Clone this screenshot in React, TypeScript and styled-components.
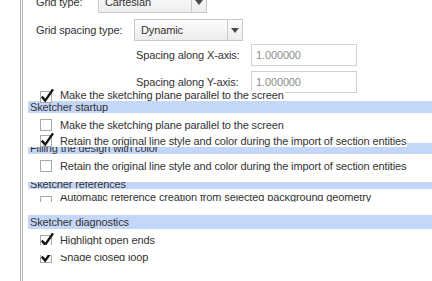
import styled, { createGlobalStyle } from "styled-components";

const GlobalStyle = createGlobalStyle`
  html, body {
    margin: 0;
    padding: 0;
    background: #fff;
    overflow: hidden;
  }
  body {
    font-family: "Liberation Sans", Arial, sans-serif;
    font-size: 11px;
    color: #333;
    letter-spacing: -0.13px;
  }
`;

const Page = styled.div`
  height: 281px;
  padding-left: 20px;
  overflow: hidden;
`;

const Panel = styled.div`
  height: 100%;
  border-left: 3px double #b2b2b2;
  display: flex;
  flex-direction: column;
  align-items: flex-start;
`;

const Form = styled.div`
  display: flex;
  flex-direction: column;
  flex-shrink: 0;
  margin-top: -9px;
  padding-left: 13px;
`;

const FormRow = styled.div<{ $gap: number; $indent?: number }>`
  display: flex;
  align-items: center;
  height: 22px;
  margin-top: ${({ $gap }) => $gap}px;
  padding-left: ${({ $indent }) => $indent ?? 0}px;
`;

const FieldLabel = styled.span<{ $w: number }>`
  width: ${({ $w }) => $w}px;
  flex-shrink: 0;
  white-space: nowrap;
`;

const Select = styled.div`
  display: flex;
  width: 109px;
  height: 22px;
  box-sizing: border-box;
  border: 1px solid #c9c9c9;
  background: linear-gradient(#fefefe, #ececec);
`;

const SelectValue = styled.span`
  flex: 1;
  padding-left: 6px;
  line-height: 20px;
`;

const SelectArrow = styled.span`
  width: 14px;
  border-left: 1px solid #c9c9c9;
  display: flex;
  align-items: center;
  justify-content: center;

  &::after {
    content: "";
    border-left: 4px solid transparent;
    border-right: 4px solid transparent;
    border-top: 5px solid #4a4a4a;
  }
`;

const NumInput = styled.input`
  width: 106px;
  height: 22px;
  box-sizing: border-box;
  margin: 0;
  border: 1px solid #d0d0d0;
  padding: 0 0 0 4px;
  font: inherit;
  letter-spacing: inherit;
  color: #8c8c8c;
  background: #fff;
  outline: none;
`;

const Section = styled.div<{ $top: number; $h: number }>`
  position: relative;
  flex-shrink: 0;
  align-self: stretch;
  margin: ${({ $top }) => $top}px 0 0 5px;
  height: ${({ $h }) => $h}px;
  overflow: hidden;
  background: #c5d7f8;
  padding-left: 2px;
`;

const SectionTitle = styled.div<{ $lh: number; $shift: number }>`
  line-height: ${({ $lh }) => $lh}px;
  margin-top: ${({ $shift }) => $shift}px;
  white-space: nowrap;
`;

const CheckRow = styled.div<{ $top: number; $h: number; $clip?: boolean; $front?: boolean }>`
  position: relative;
  z-index: ${({ $front }) => ($front ? 1 : "auto")};
  flex-shrink: 0;
  margin: ${({ $top }) => $top}px 0 0 5px;
  height: ${({ $h }) => $h}px;
  padding: 0 1px 0 12px;
  background: #fff;
  overflow: ${({ $clip }) => ($clip ? "hidden" : "visible")};
`;

const CheckLine = styled.div<{ $shift: number }>`
  display: flex;
  align-items: flex-start;
  margin-top: ${({ $shift }) => $shift}px;
`;

const BoxSvg = styled.svg<{ $y: number }>`
  flex-shrink: 0;
  display: block;
  overflow: visible;
  margin-top: ${({ $y }) => $y}px;
`;

const CheckText = styled.span<{ $lh: number }>`
  margin-left: 8px;
  line-height: ${({ $lh }) => $lh}px;
  white-space: nowrap;
`;

type CheckProps = {
  label: string;
  checked?: boolean;
  top: number;
  h: number;
  shift?: number;
  boxY?: number;
  lh?: number;
  clip?: boolean;
  front?: boolean;
};

const Check = ({ label, checked, top, h, shift = 0, boxY = 0, lh = 12, clip, front }: CheckProps) => (
  <CheckRow $top={top} $h={h} $clip={clip} $front={front}>
    <CheckLine $shift={shift}>
      <BoxSvg $y={boxY} width="12" height="12" viewBox="0 0 12 12">
        <rect x="0.5" y="0.5" width="11" height="11" fill="#fff" stroke="#a9a9a9" />
        {checked && (
          <path
            d="M1.8 5.6 L5.2 9.6 L13 -1.6"
            fill="none"
            stroke="#151515"
            strokeWidth="2.4"
            strokeLinejoin="miter"
          />
        )}
      </BoxSvg>
      <CheckText $lh={lh}>{label}</CheckText>
    </CheckLine>
  </CheckRow>
);

const MAKE_PARALLEL = "Make the sketching plane parallel to the screen";
const RETAIN_STYLE =
  "Retain the original line style and color during the import of section entities";

export default function App() {
  return (
    <>
      <GlobalStyle />
      <Page>
        <Panel>
          <Form>
            <FormRow $gap={0}>
              <FieldLabel $w={62}>Grid type:</FieldLabel>
              <Select>
                <SelectValue>Cartesian</SelectValue>
                <SelectArrow />
              </Select>
            </FormRow>
            <FormRow $gap={6}>
              <FieldLabel $w={98}>Grid spacing type:</FieldLabel>
              <Select>
                <SelectValue>Dynamic</SelectValue>
                <SelectArrow />
              </Select>
            </FormRow>
            <FormRow $gap={3} $indent={100}>
              <FieldLabel $w={115}>Spacing along X-axis:</FieldLabel>
              <NumInput readOnly value="1.000000" />
            </FormRow>
            <FormRow $gap={5} $indent={100}>
              <FieldLabel $w={115}>Spacing along Y-axis:</FieldLabel>
              <NumInput readOnly value="1.000000" />
            </FormRow>
          </Form>

          <Check label={MAKE_PARALLEL} checked top={-2} h={10} shift={-1} boxY={1} lh={11} front />
          <Section $top={0} $h={12}>
            <SectionTitle $lh={12} $shift={0}>Sketcher startup</SectionTitle>
          </Section>
          <Check label={MAKE_PARALLEL} top={6} h={13} lh={13} />
          <Check label={RETAIN_STYLE} checked top={1} h={14} shift={2} lh={13} front />
          <Section $top={-4} $h={11}>
            <SectionTitle $lh={11} $shift={0}>Filling the design with color</SectionTitle>
          </Section>
          <Check label={RETAIN_STYLE} top={6} h={12} shift={0} boxY={0} lh={12} clip />
          <Section $top={10} $h={7}>
            <SectionTitle $lh={7} $shift={-1}>Sketcher references</SectionTitle>
          </Section>
          <Check
            label="Automatic reference creation from selected background geometry"
            top={6}
            h={7}
            shift={-4}
            boxY={5}
            clip
          />
          <Section $top={13} $h={14}>
            <SectionTitle $lh={14} $shift={0}>Sketcher diagnostics</SectionTitle>
          </Section>
          <Check label="Highlight open ends" checked top={4} h={12} shift={1} boxY={1} clip />
          <Check label="Shade closed loop" checked top={10} h={8} shift={-4} clip />
        </Panel>
      </Page>
    </>
  );
}
